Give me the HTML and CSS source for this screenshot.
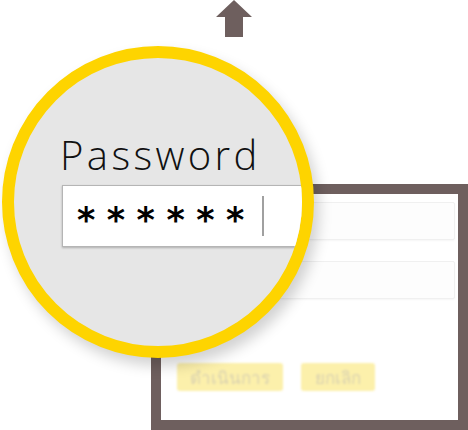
FILE: index.html
```html
<!DOCTYPE html>
<html lang="th">
<head>
    <meta charset="UTF-8">
    <meta name="viewport" content="width=device-width, initial-scale=1.0">
    <title>Password</title>
    <link rel="stylesheet" href="styles.css">
</head>
<body>
    <div class="stage">
        <div class="arrow">
            <svg width="36" height="37" viewBox="0 0 36 37">
                <path d="M18 0 L36 17 L27 17 L27 37 L9 37 L9 17 L0 17 Z" fill="#6e5f5e"/>
            </svg>
        </div>
        <div class="frame">
            <div class="field"></div>
            <div class="field"></div>
            <div class="actions">
                <span class="btn btn-ok">ดำเนินการ</span>
                <span class="btn btn-cancel">ยกเลิก</span>
            </div>
        </div>
        <div class="lens">
            <div class="lens-label">Password</div>
            <div class="lens-input">
                <span class="stars">******</span>
                <span class="caret"></span>
            </div>
        </div>
    </div>
</body>
</html>
```

FILE: styles.css
```css
body {
    margin: 0;
    padding: 0;
    background-color: #fff;
    font-family: "Open Sans", "Noto Sans", sans-serif;
}
.stage {
    position: relative;
    width: 468px;
    height: 430px;
    overflow: hidden;
}
.arrow {
    display: flex;
    justify-content: center;
    height: 37px;
}
.arrow svg {
    display: block;
}
.frame {
    box-sizing: border-box;
    width: 317px;
    height: 246px;
    margin: 147px 0 0 151px;
    border: 10px solid #6e5f5e;
    background-color: #fff;
    padding: 8px 3px 0 20px;
}
.field {
    height: 36px;
    border: 1px solid #f0f0f0;
    border-radius: 2px;
    background-color: #fdfdfd;
    box-shadow: 0 1px 2px rgba(0, 0, 0, 0.04);
    margin-bottom: 21px;
}
.actions {
    display: flex;
    gap: 18px;
    margin-top: 64px;
    filter: blur(0.8px);
}
.btn {
    display: flex;
    align-items: center;
    justify-content: center;
    height: 28px;
    border-radius: 3px;
    background-color: #fcf0ab;
    color: #dbd3b0;
    font-family: "Noto Sans", "DejaVu Sans", sans-serif;
    font-size: 17px;
}
.btn-ok {
    width: 106px;
    margin-left: -4px;
}
.btn-cancel {
    width: 74px;
}
.lens {
    position: absolute;
    left: 2px;
    top: 46px;
    box-sizing: border-box;
    width: 312px;
    height: 312px;
    border-radius: 50%;
    border: 12px solid #fed400;
    background-color: #e6e6e6;
    overflow: hidden;
    box-shadow: 5px 8px 14px rgba(0, 0, 0, 0.18);
}
.lens-label {
    margin: 75px 0 0 46px;
    font-size: 40px;
    font-weight: 300;
    letter-spacing: 3.4px;
    line-height: 44px;
    color: #111;
}
.lens-input {
    display: flex;
    align-items: center;
    box-sizing: border-box;
    width: 300px;
    height: 62px;
    margin: 8px 0 0 48px;
    padding-left: 14px;
    background-color: #fff;
    border: 1px solid #b5b5b5;
    box-shadow: 0 1px 2px rgba(0, 0, 0, 0.25);
}
.stars {
    font-family: "DejaVu Sans", sans-serif;
    font-size: 35px;
    font-weight: bold;
    letter-spacing: 11.5px;
    line-height: 1;
    padding-top: 8px;
    color: #000;
}
.caret {
    width: 2px;
    height: 40px;
    margin-left: 6px;
    background-color: #a0a0a0;
}
```
